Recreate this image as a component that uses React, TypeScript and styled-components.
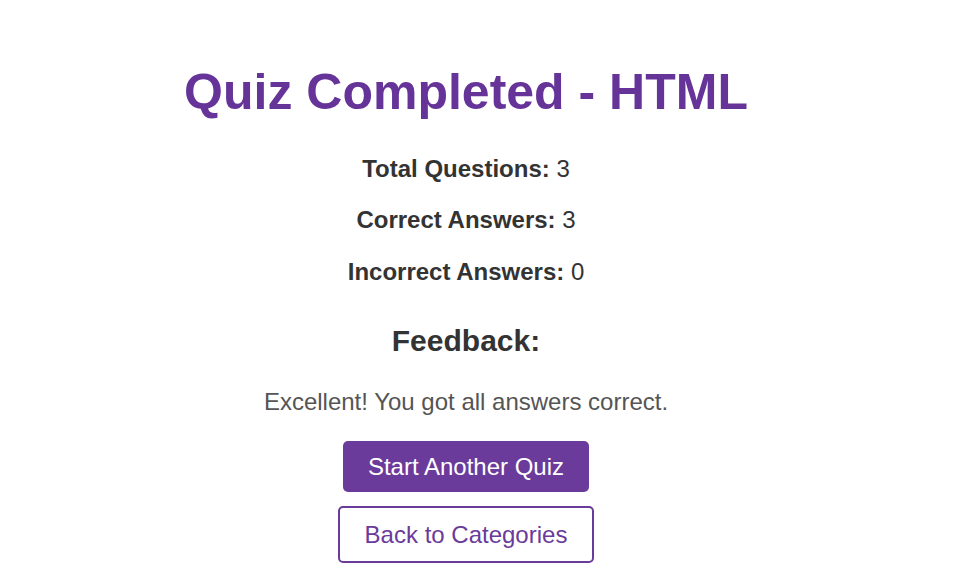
import React from "react";
import styled, { createGlobalStyle } from "styled-components";

const Global = createGlobalStyle`
  html, body { margin: 0; padding: 0; background: #ffffff; }
  body { font-family: "Liberation Sans", Arial, sans-serif; color: #333333; }
`;

const Page = styled.main`
  box-sizing: border-box;
  width: 100%;
  padding: 64px 31px 0 0;
  display: flex;
  flex-direction: column;
  align-items: center;
  text-align: center;
`;

const Title = styled.h1`
  margin: 0 0 33px;
  font-size: 50px;
  font-weight: 700;
  color: #663399;
  line-height: 1.15;
`;

const Stat = styled.p`
  margin: 0 0 24px;
  font-size: 24px;
  line-height: 27.6px;
  color: #333333;
  & strong { font-weight: 700; }
  &:last-of-type { margin-bottom: 39px; }
`;

const Heading = styled.h2`
  margin: 0 0 29px;
  font-size: 30px;
  line-height: 34.5px;
  font-weight: 700;
  color: #333333;
`;

const Message = styled.p`
  margin: 0 0 26px;
  font-size: 24px;
  line-height: 27.6px;
  color: #555555;
`;

const Actions = styled.div`
  display: flex;
  flex-direction: column;
  align-items: center;
  gap: 14px;
`;

const Button = styled.button<{ $variant: "solid" | "outline" }>`
  font-family: "Liberation Sans", Arial, sans-serif;
  font-size: 24px;
  line-height: 27px;
  padding: ${(p) => (p.$variant === "solid" ? "12px 25px" : "13px 25px")};
  border-radius: 5px;
  cursor: pointer;
  background: ${(p) => (p.$variant === "solid" ? "#6a3b9b" : "#ffffff")};
  color: ${(p) => (p.$variant === "solid" ? "#ffffff" : "#6a3b9b")};
  border: ${(p) => (p.$variant === "solid" ? "none" : "2px solid #6a3b9b")};
`;

export default function App() {
  return (
    <>
      <Global />
      <Page>
        <Title>Quiz Completed - HTML</Title>
        <div>
          <Stat><strong>Total Questions:</strong> 3</Stat>
          <Stat><strong>Correct Answers:</strong> 3</Stat>
          <Stat><strong>Incorrect Answers:</strong> 0</Stat>
        </div>
        <Heading>Feedback:</Heading>
        <Message>Excellent! You got all answers correct.</Message>
        <Actions>
          <Button $variant="solid">Start Another Quiz</Button>
          <Button $variant="outline">Back to Categories</Button>
        </Actions>
      </Page>
    </>
  );
}
